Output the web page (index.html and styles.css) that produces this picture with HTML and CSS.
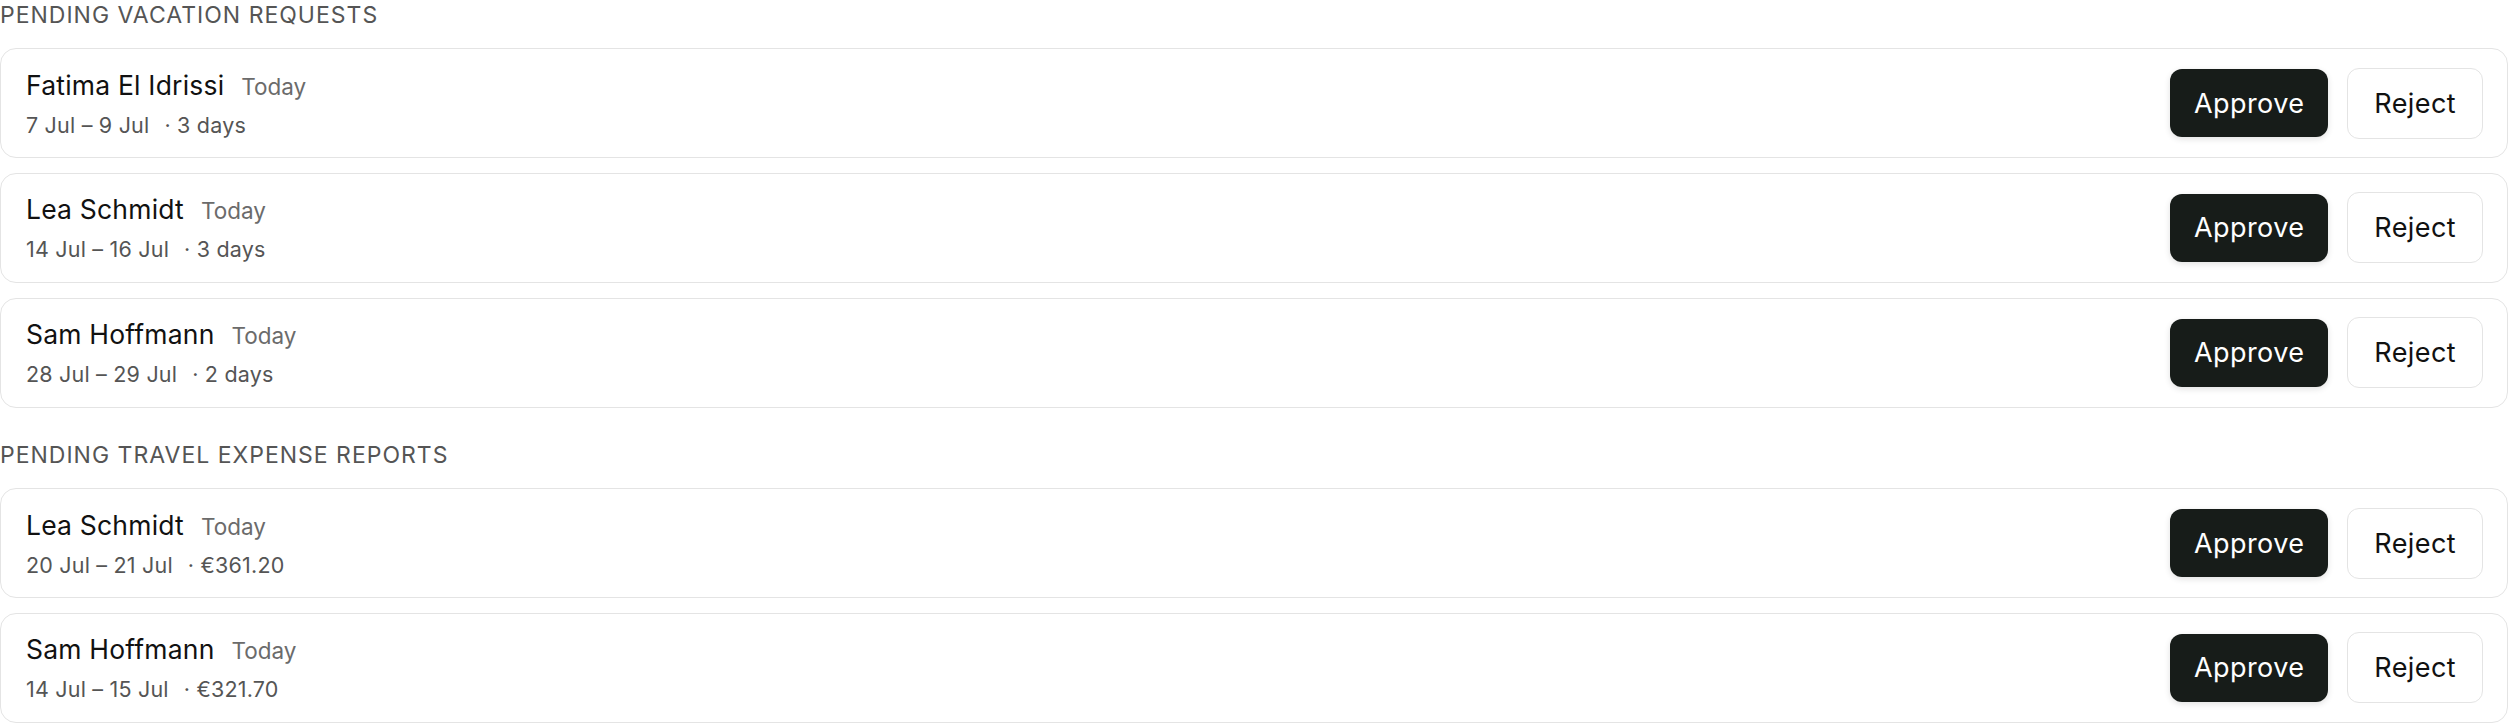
FILE: index.html
```html
<!DOCTYPE html>
<html lang="en">
<head>
    <meta charset="UTF-8">
    <meta name="viewport" content="width=device-width, initial-scale=1.0">
    <title>Pending Approvals</title>
    <link rel="stylesheet" href="styles.css">
</head>
<body>
    <section class="group">
        <h2 class="group-title">Pending vacation requests</h2>
        <div class="request-list">
            <div class="request">
                <div class="request-info">
                    <div class="request-head"><span class="request-name">Fatima El Idrissi</span><span class="request-when">Today</span></div>
                    <div class="request-meta"><span>7 Jul – 9 Jul</span><span class="request-extra">· 3 days</span></div>
                </div>
                <div class="request-actions">
                    <button class="btn btn-approve">Approve</button>
                    <button class="btn btn-reject">Reject</button>
                </div>
            </div>
            <div class="request">
                <div class="request-info">
                    <div class="request-head"><span class="request-name">Lea Schmidt</span><span class="request-when">Today</span></div>
                    <div class="request-meta"><span>14 Jul – 16 Jul</span><span class="request-extra">· 3 days</span></div>
                </div>
                <div class="request-actions">
                    <button class="btn btn-approve">Approve</button>
                    <button class="btn btn-reject">Reject</button>
                </div>
            </div>
            <div class="request">
                <div class="request-info">
                    <div class="request-head"><span class="request-name">Sam Hoffmann</span><span class="request-when">Today</span></div>
                    <div class="request-meta"><span>28 Jul – 29 Jul</span><span class="request-extra">· 2 days</span></div>
                </div>
                <div class="request-actions">
                    <button class="btn btn-approve">Approve</button>
                    <button class="btn btn-reject">Reject</button>
                </div>
            </div>
        </div>
    </section>

    <section class="group">
        <h2 class="group-title">Pending travel expense reports</h2>
        <div class="request-list">
            <div class="request">
                <div class="request-info">
                    <div class="request-head"><span class="request-name">Lea Schmidt</span><span class="request-when">Today</span></div>
                    <div class="request-meta"><span>20 Jul – 21 Jul</span><span class="request-extra">· €361.20</span></div>
                </div>
                <div class="request-actions">
                    <button class="btn btn-approve">Approve</button>
                    <button class="btn btn-reject">Reject</button>
                </div>
            </div>
            <div class="request">
                <div class="request-info">
                    <div class="request-head"><span class="request-name">Sam Hoffmann</span><span class="request-when">Today</span></div>
                    <div class="request-meta"><span>14 Jul – 15 Jul</span><span class="request-extra">· €321.70</span></div>
                </div>
                <div class="request-actions">
                    <button class="btn btn-approve">Approve</button>
                    <button class="btn btn-reject">Reject</button>
                </div>
            </div>
        </div>
    </section>
</body>
</html>
```

FILE: styles.css
```css
body {
    font-family: Inter, "Noto Sans", sans-serif;
    background-color: #ffffff;
    color: #111111;
    margin: 0;
}

.group {
    margin-bottom: 32px;
}

.group-title {
    font-size: 23px;
    font-weight: 400;
    line-height: 30px;
    color: #555555;
    text-transform: uppercase;
    letter-spacing: 1px;
    margin: 0 0 18px;
}

.request-list {
    display: flex;
    flex-direction: column;
    gap: 14.4px;
}

.request {
    display: flex;
    align-items: center;
    justify-content: space-between;
    height: 110.4px;
    box-sizing: border-box;
    padding: 0 24px 0 25px;
    border: 1.6px solid #e4e4e4;
    border-radius: 16px;
    background-color: #ffffff;
}

.request-head {
    display: flex;
    align-items: baseline;
    gap: 17px;
    line-height: 38px;
    margin-bottom: 3px;
}

.request-name {
    font-size: 26.5px;
    color: #111111;
    letter-spacing: 0.2px;
}

.request-when {
    font-size: 22.5px;
    color: #6b6b6b;
}

.request-meta {
    font-size: 21.5px;
    line-height: 32px;
    color: #555555;
    letter-spacing: 0.2px;
}

.request-extra {
    margin-left: 15px;
}

.request-actions {
    display: flex;
    align-items: center;
    gap: 19px;
}

.btn {
    font-family: inherit;
    font-size: 27px;
    letter-spacing: 0.4px;
    height: 68px;
    padding: 0 24px;
    border-radius: 12px;
    cursor: pointer;
}

.btn-approve {
    background-color: #171c19;
    color: #ffffff;
    border: none;
    box-shadow: 0 2px 6px rgba(0, 0, 0, 0.12);
}

.btn-reject {
    background-color: #ffffff;
    color: #111111;
    border: 1.6px solid #e4e4e4;
    height: 71px;
    padding: 0 26px;
}
```
